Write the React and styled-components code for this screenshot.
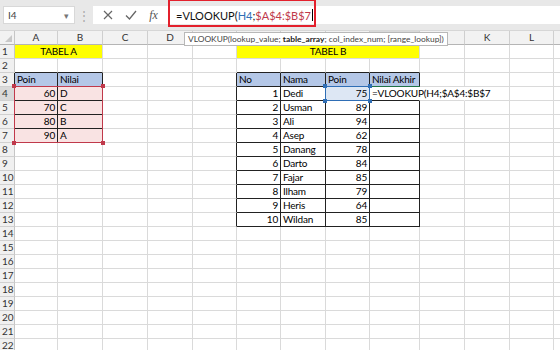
import React from "react";
import styled, { createGlobalStyle } from "styled-components";

const GlobalStyle = createGlobalStyle`
  html, body { margin: 0; padding: 0; background: #fff; overflow: hidden; }
  body { font-family: Lato, "Liberation Sans", sans-serif; }
`;

const COLS = ["A", "B", "C", "D", "E", "F", "G", "H", "I", "J", "K", "L", "M"];
const WIDTHS = [43, 45, 45, 45, 44, 44, 45, 44, 50, 45, 45, 44, 40];
// letters that sit under the tooltip or off the edge are not drawn
const HIDDEN_HEAD = ["E", "F", "G", "H", "I", "J", "M"];
const HDR_W = 15;
const ROW_H = 14;
const HEAD_H = 14;
const ROWS = 22;

const YELLOW = "#ffff00";
const HEAD = "#b4c7e7";
const GRID = "#dadada";
const LINE = "#222";

// data for the two tables
const tabelA = [[60, "D"], [70, "C"], [80, "B"], [90, "A"]];
const tabelB = [
  ["Dedi", 75], ["Usman", 89], ["Ali", 94], ["Asep", 62], ["Danang", 78],
  ["Darto", 84], ["Fajar", 85], ["Ilham", 79], ["Heris", 64], ["Wildan", 85],
];

const cells = {};
cells["1,1"] = { text: "TABEL A", span: 2, fill: YELLOW, align: "center" };
cells["1,6"] = { text: "TABEL B", span: 4, fill: YELLOW, align: "center" };
cells["3,1"] = { text: "Poin", fill: HEAD };
cells["3,2"] = { text: "Nilai", fill: HEAD };
tabelA.forEach(([p, n], i) => {
  cells[`${4 + i},1`] = { text: p, align: "right", fill: "#f9e3e3" };
  cells[`${4 + i},2`] = { text: n, fill: "#f9e3e3" };
});
cells["3,6"] = { text: "No", fill: HEAD };
cells["3,7"] = { text: "Nama", fill: HEAD };
cells["3,8"] = { text: "Poin", fill: HEAD };
cells["3,9"] = { text: "Nilai Akhir", fill: HEAD };
tabelB.forEach(([nama, poin], i) => {
  cells[`${4 + i},6`] = { text: i + 1, align: "right" };
  cells[`${4 + i},7`] = { text: nama };
  cells[`${4 + i},8`] = { text: poin, align: "right", fill: i === 0 ? "#dde7f4" : undefined };
});
cells["4,9"] = { text: "=VLOOKUP(H4;$A$4:$B$7", overflow: true, noRight: true };
cells["4,10"] = { noRight: true };

const inTable = (r, c) =>
  (r >= 3 && r <= 7 && c >= 1 && c <= 2) || (r >= 3 && r <= 13 && c >= 6 && c <= 9);

const colX = (c) => HDR_W + WIDTHS.slice(0, c - 1).reduce((a, b) => a + b, 0);
const rowY = (r) => HEAD_H + (r - 1) * ROW_H;

export default function App() {
  const rows = [];
  for (let r = 1; r <= ROWS; r++) {
    rows.push(
      <RowHead key={`h${r}`} $active={r === 4} $br={inTable(r, 1) ? LINE : "#c6c6c6"}>
        {r}
      </RowHead>
    );
    for (let c = 1; c <= COLS.length; c++) {
      const d = cells[`${r},${c}`] || {};
      const span = d.span || 1;
      const last = c + span - 1;
      let br = inTable(r, last) || inTable(r, last + 1) ? LINE : GRID;
      if (d.noRight) br = "transparent";
      const bb = inTable(r, c) || inTable(r + 1, c) ? LINE : GRID;
      rows.push(
        <Cell
          key={`${r},${c}`}
          $span={span}
          $fill={d.fill}
          $align={d.align}
          $br={br}
          $bb={bb}
          $overflow={d.overflow}
        >
          {d.text}
        </Cell>
      );
      c = last;
    }
  }

  return (
    <Page>
      <GlobalStyle />
      <Toolbar>
        <NameBox>
          <span>I4</span>
          <Caret>▾</Caret>
        </NameBox>
        <Dots>⋮</Dots>
        <IconBox>
          <svg width="10" height="10" viewBox="0 0 10 10">
            <path d="M1 1 L9 9 M9 1 L1 9" stroke="#666" strokeWidth="1.2" />
          </svg>
          <svg width="12" height="10" viewBox="0 0 12 10">
            <path d="M1 5.5 L4.5 9 L11 1" stroke="#666" strokeWidth="1.3" fill="none" />
          </svg>
          <Fx>fx</Fx>
        </IconBox>
        <FormulaBox>
          <span>=VLOOKUP(</span>
          <Ref $color="#2f6eb5">H4</Ref>
          <span>;</span>
          <Ref $color="#c0394b">$A$4:$B$7</Ref>
          <Caretline />
          <RedFrame />
        </FormulaBox>
      </Toolbar>
      <Sheet>
        <Corner />
        {COLS.map((l) => (
          <ColHead key={l} $active={l === "I"}>
            {HIDDEN_HEAD.includes(l) ? "" : l}
          </ColHead>
        ))}
        {rows}
        <RangeBox
          $color="#c0394b"
          style={{ left: colX(1) - 1, top: rowY(4) - 1, width: 43 + 45 + 1, height: 4 * ROW_H + 1 }}
        >
          <Handle $color="#c0394b" $pos="tl" />
          <Handle $color="#c0394b" $pos="tr" />
          <Handle $color="#c0394b" $pos="bl" />
          <Handle $color="#c0394b" $pos="br" />
        </RangeBox>
        <RangeBox
          $color="#2f6eb5"
          style={{ left: colX(8) - 1, top: rowY(4) - 1, width: 44 + 1, height: ROW_H + 1 }}
        >
          <Handle $color="#2f6eb5" $pos="tl" />
          <Handle $color="#2f6eb5" $pos="tr" />
          <Handle $color="#2f6eb5" $pos="bl" />
          <Handle $color="#2f6eb5" $pos="br" />
        </RangeBox>
        <ActiveCell style={{ left: colX(9) - 1, top: rowY(4) - 1, width: 50 + 1, height: ROW_H + 1 }} />
      </Sheet>
      <Tooltip>
        VLOOKUP(lookup_value; <b>table_array</b>; col_index_num; [range_lookup])
      </Tooltip>
    </Page>
  );
}

const Page = styled.div`
  position: relative;
  width: 560px;
  height: 350px;
  overflow: hidden;
  font-size: 11px;
  color: #000;
`;

const Toolbar = styled.div`
  display: flex;
  align-items: center;
  height: 31px;
  background: #e8e8e8;
  padding-left: 3px;
  box-sizing: border-box;
  border-bottom: 1px solid #d6d6d6;
`;

const NameBox = styled.div`
  width: 72px;
  height: 18px;
  box-sizing: border-box;
  background: #fff;
  border: 1px solid #d8d8d8;
  display: flex;
  align-items: center;
  justify-content: space-between;
  padding: 0 5px 0 4px;
  color: #444;
  font-size: 10px;
`;

const Caret = styled.span`
  color: #777;
  font-size: 9px;
`;

const Dots = styled.div`
  width: 18px;
  text-align: center;
  color: #aaa;
  font-size: 12px;
`;

const IconBox = styled.div`
  width: 75px;
  height: 18px;
  background: #fff;
  display: flex;
  align-items: center;
  justify-content: space-around;
  padding: 0 4px;
  box-sizing: border-box;
`;

const Fx = styled.span`
  font-family: "Liberation Serif", serif;
  font-style: italic;
  font-size: 12px;
  color: #555;
`;

const FormulaBox = styled.div`
  position: relative;
  flex: 1;
  height: 18px;
  background: #fff;
  display: flex;
  align-items: center;
  padding-left: 8px;
  font-size: 11px;
  color: #111;
`;

const Ref = styled.span`
  color: ${(p) => p.$color};
`;

const Caretline = styled.span`
  display: inline-block;
  width: 1px;
  height: 12px;
  background: #000;
  margin-left: 1px;
`;

const RedFrame = styled.div`
  position: absolute;
  left: 0;
  top: -7px;
  width: 148px;
  height: 28px;
  border: 2px solid #e3202c;
  box-sizing: border-box;
`;

const Sheet = styled.div`
  position: relative;
  display: grid;
  grid-template-columns: ${HDR_W}px ${WIDTHS.map((w) => `${w}px`).join(" ")};
  grid-auto-rows: ${ROW_H}px;
`;

const Corner = styled.div`
  position: relative;
  background: #f2f2f2;
  border-right: 1px solid #c6c6c6;
  border-bottom: 1px solid #b5b5b5;
  box-sizing: border-box;
  &::after {
    content: "";
    position: absolute;
    right: 2px;
    bottom: 2px;
    border-left: 7px solid transparent;
    border-bottom: 7px solid #c8c8c8;
  }
`;

const ColHead = styled.div`
  background: ${(p) => (p.$active ? "#d9d9d9" : "#f2f2f2")};
  border-right: 1px solid #cfcfcf;
  border-bottom: 1px solid ${(p) => (p.$active ? "#217346" : "#b5b5b5")};
  box-sizing: border-box;
  text-align: center;
  font-size: 10px;
  line-height: 13px;
  color: #333;
`;

const RowHead = styled.div`
  background: ${(p) => (p.$active ? "#d9d9d9" : "#f0f0f0")};
  border-right: 1px solid ${(p) => (p.$active ? "#217346" : p.$br)};
  border-bottom: 1px solid #d0d0d0;
  box-sizing: border-box;
  font-size: 10px;
  line-height: 13px;
  padding-left: 2px;
  color: #333;
`;

const Cell = styled.div`
  grid-column: span ${(p) => p.$span};
  box-sizing: border-box;
  border-right: 1px solid ${(p) => p.$br};
  border-bottom: 1px solid ${(p) => p.$bb};
  background: ${(p) => p.$fill || "#fff"};
  text-align: ${(p) => p.$align || "left"};
  font-size: 10px;
  letter-spacing: -0.2px;
  line-height: 13px;
  padding: 0 2px;
  white-space: nowrap;
  overflow: ${(p) => (p.$overflow ? "visible" : "hidden")};
  position: ${(p) => (p.$overflow ? "relative" : "static")};
  z-index: ${(p) => (p.$overflow ? 2 : "auto")};
`;

const RangeBox = styled.div`
  position: absolute;
  box-sizing: border-box;
  border: 1.5px solid ${(p) => p.$color};
  z-index: 3;
`;

const Handle = styled.div`
  position: absolute;
  width: 4px;
  height: 4px;
  background: ${(p) => p.$color};
  ${(p) => (p.$pos[0] === "t" ? "top: -3px;" : "bottom: -3px;")}
  ${(p) => (p.$pos[1] === "l" ? "left: -3px;" : "right: -3px;")}
`;

const ActiveCell = styled.div`
  position: absolute;
  box-sizing: border-box;
  border: 2px solid #217346;
  border-top-width: 1px;
  border-left: none;
  z-index: 1;
`;

const Tooltip = styled.div`
  position: absolute;
  left: 184px;
  top: 32px;
  width: 264px;
  height: 14px;
  box-sizing: border-box;
  background: #fff;
  border: 1px solid #b8b8b8;
  font-size: 8.4px;
  line-height: 12px;
  padding: 0 3px;
  color: #444;
  white-space: nowrap;
  overflow: hidden;
  z-index: 5;
  b { color: #222; }
`;
